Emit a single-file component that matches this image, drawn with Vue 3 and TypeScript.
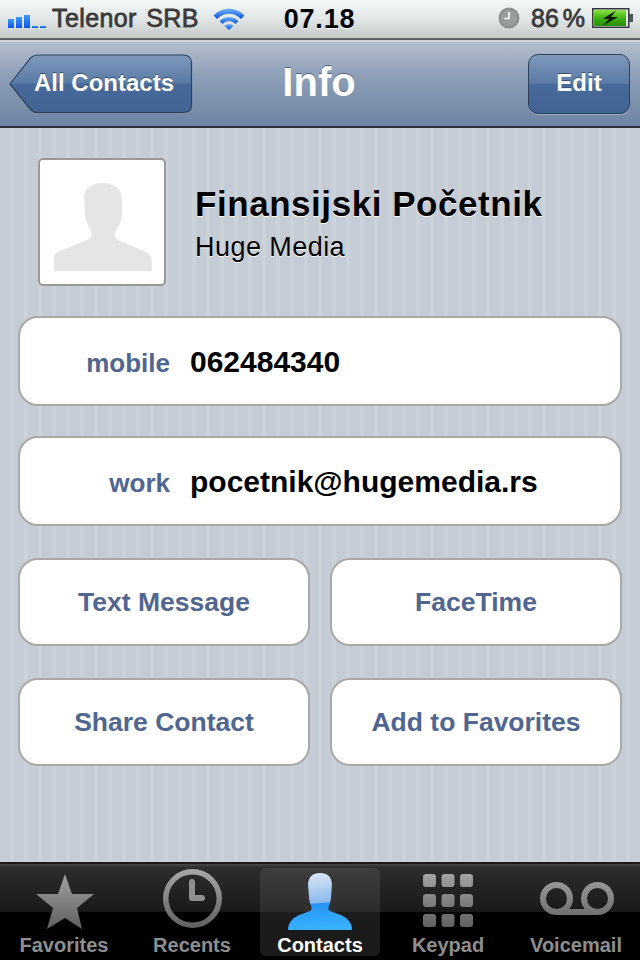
<script setup lang="ts">
interface Tab {
  label: string
  active?: boolean
}

const tabs: Tab[] = [
  { label: 'Favorites' },
  { label: 'Recents' },
  { label: 'Contacts', active: true },
  { label: 'Keypad' },
  { label: 'Voicemail' },
]

const signalBars = [9, 11, 13, 2, 2]
const keypadRows = [0, 1, 2]
const keypadCols = [0, 1, 2]
</script>

<template>
  <div class="phone">
    <header class="status">
      <div class="status-left">
        <span class="signal">
          <i v-for="(h, n) in signalBars" :key="n" :style="{ height: h + 'px' }" />
        </span>
        <span class="carrier">Telenor SRB</span>
        <svg class="wifi" width="32" height="24" viewBox="0 0 32 24">
          <defs>
            <linearGradient id="wifi-blue" x1="0" y1="0" x2="0" y2="1">
              <stop offset="0" stop-color="#6fb4f5" />
              <stop offset="1" stop-color="#0a50e0" />
            </linearGradient>
          </defs>
          <path d="M0.500 9.500 C9 0.500 23 0.500 31.500 9.500 L28 13 C21 6 11 6 4 13 Z" fill="url(#wifi-blue)" />
          <path d="M6.500 15 C12 9.500 20 9.500 25.500 15 L22.500 18 C18.500 14 13.500 14 9.500 18 Z" fill="url(#wifi-blue)" />
          <path d="M11.500 20 C14.500 17.300 17.500 17.300 20.500 20 L16 24 Z" fill="url(#wifi-blue)" />
        </svg>
      </div>
      <span class="clock">07.18</span>
      <div class="status-right">
        <svg class="alarm" width="22" height="22" viewBox="0 0 22 22">
          <circle cx="11" cy="11" r="10.500" fill="#8c9090" />
          <circle cx="11" cy="11" r="8" fill="#999d9d" />
          <path d="M11 5v6.500H6.500" fill="none" stroke="#fff" stroke-width="1.600" />
        </svg>
        <span class="percent">86 %</span>
        <svg class="battery" width="42" height="22" viewBox="0 0 42 22">
          <defs>
            <linearGradient id="batt-green" x1="0" y1="0" x2="0" y2="1">
              <stop offset="0" stop-color="#8fe04a" />
              <stop offset="0.500" stop-color="#3fb40e" />
              <stop offset="1" stop-color="#2a8a08" />
            </linearGradient>
          </defs>
          <rect x="0.750" y="1.750" width="36" height="18.500" fill="#e8ecec" stroke="#33383c" stroke-width="1.500" />
          <rect x="2" y="3" width="32" height="16" fill="url(#batt-green)" />
          <rect x="37" y="7" width="4" height="8" fill="#4a5660" />
          <path d="M24 3.500 L10.500 12 L17 12 L11 18.500 L26 10 L19 10 Z" fill="#0b1a05" />
        </svg>
      </div>
    </header>

    <nav class="navbar">
      <button class="bar-btn back">
        <svg class="back-shape" width="184" height="60" viewBox="0 0 184 60">
          <defs>
            <linearGradient id="btn-blue" x1="0" y1="0" x2="0" y2="1">
              <stop offset="0" stop-color="#7f98bb" />
              <stop offset="0.49" stop-color="#5a7ba6" />
              <stop offset="0.5" stop-color="#476a9b" />
              <stop offset="1" stop-color="#426493" />
            </linearGradient>
          </defs>
          <path d="M1 30 L22 3.500 Q24.500 1 29 1 H174 Q182.500 1 182.500 9 V51 Q182.500 58.500 174 58.500 H29 Q24.500 58.500 22 56 Z" fill="url(#btn-blue)" stroke="#2d4059" stroke-width="1.200" />
        </svg>
        <span>All Contacts</span>
      </button>
      <h1>Info</h1>
      <button class="bar-btn edit"><span>Edit</span></button>
    </nav>

    <main class="content">
      <section class="head">
        <div class="photo">
          <svg width="98" height="88" viewBox="0 0 98 88">
            <path fill="#e5e5e5" d="M0 88 L0 73 Q1 70 6 68 L32 57.500 Q37 55.500 38 52 L36 45 Q33 42 31 33 L30 13 Q31 7 34 5 Q40 0 48 0 Q57 0 63 5 Q68 9 68 17 L68 32 Q67 41 63 45 L60 52 Q61 55 65 57.500 L92 69 Q97 72 97.500 77 L98 88 Z" />
          </svg>
        </div>
        <div class="names">
          <div class="name">Finansijski Početnik</div>
          <div class="org">Huge Media</div>
        </div>
      </section>

      <div class="card row">
        <span class="key">mobile</span>
        <span class="val">062484340</span>
      </div>
      <div class="card row">
        <span class="key">work</span>
        <span class="val">pocetnik@hugemedia.rs</span>
      </div>

      <div class="actions">
        <div class="card action">Text Message</div>
        <div class="card action">FaceTime</div>
        <div class="card action">Share Contact</div>
        <div class="card action">Add to Favorites</div>
      </div>
    </main>

    <footer class="tabbar">
      <div v-for="t in tabs" :key="t.label" class="tab" :class="{ active: t.active }">
        <svg width="80" height="64" viewBox="0 0 80 64">
          <defs v-if="t.label === 'Favorites'">
            <linearGradient id="tab-grey" gradientUnits="userSpaceOnUse" x1="0" y1="0" x2="0" y2="62">
              <stop offset="0" stop-color="#a8a8a8" />
              <stop offset="1" stop-color="#5c5c5c" />
            </linearGradient>
            <linearGradient id="tab-blue" x1="0.3" y1="0" x2="0.38" y2="1">
              <stop offset="0" stop-color="#dce8f6" />
              <stop offset="0.53" stop-color="#8ab8ec" />
              <stop offset="0.55" stop-color="#2795f6" />
              <stop offset="1" stop-color="#38b2fd" />
            </linearGradient>
          </defs>
          <path v-if="t.label === 'Favorites'" fill="url(#tab-grey)" d="M41 5 L48 25 L70 25 L53 39 L58 60 L41 49 L23 60 L29 39 L12 25 L34 25 Z" />
          <g v-else-if="t.label === 'Recents'">
            <circle cx="40.500" cy="29.500" r="26.750" fill="none" stroke="url(#tab-grey)" stroke-width="5.500" />
            <path d="M40 13 V29 H50" fill="none" stroke="#8f8f8f" stroke-width="6" stroke-linejoin="round" stroke-linecap="round" />
          </g>
          <path v-else-if="t.label === 'Contacts'" fill="url(#tab-blue)" d="M8 61 Q8 55 12 51 Q14 48.500 18 46.500 L30 42 Q32 41 31.500 38 Q29.500 34 29 29 L28 15 Q29 4 40 4 Q51 4 52 15 L51 29 Q50.500 34 48.500 38 Q48 41 50 42 L62 46.500 Q66 48.500 68 51 Q72 55 72 61 Z" />
          <g v-else-if="t.label === 'Keypad'" fill="url(#tab-grey)">
            <template v-for="r in keypadRows" :key="r">
              <rect v-for="c in keypadCols" :key="c" :x="c * 18.500 + 15" :y="r * 20 + 5" width="13" height="13" rx="3" />
            </template>
          </g>
          <g v-else fill="none" stroke="url(#tab-grey)" stroke-width="6">
            <circle cx="20.500" cy="29.500" r="13.500" />
            <circle cx="61.500" cy="29.500" r="13.500" />
            <path d="M20.500 43 H61.500" />
          </g>
        </svg>
        <span>{{ t.label }}</span>
      </div>
    </footer>
  </div>
</template>

<style>
html, body {
  margin: 0;
  background: #000;
}
</style>

<style scoped>
.phone {
  width: 640px;
  height: 960px;
  display: flex;
  flex-direction: column;
  overflow: hidden;
  font-family: "Liberation Sans", Arial, sans-serif;
}

/* status bar */
.status {
  height: 40px;
  flex: none;
  display: grid;
  grid-template-columns: 1fr auto 1fr;
  align-items: center;
  padding: 0 6px 2px 8px;
  box-sizing: border-box;
  background: linear-gradient(#f2f7f8, #e2e6e7 50%, #c3c8c9);
  border-bottom: 2px solid #5c5f63;
  color: #3a3a3a;
}
.status-left,
.status-right {
  display: flex;
  align-items: center;
}
.status-right {
  justify-content: flex-end;
}
.signal {
  display: flex;
  align-items: flex-end;
  gap: 2px;
  height: 15px;
  margin-top: 4px;
}
.signal i {
  width: 6px;
  background: linear-gradient(#3f9af5, #0a55ec);
}
.carrier {
  margin-left: 6px;
  font-size: 25px;
  letter-spacing: 0.4px;
  word-spacing: 2px;
  -webkit-text-stroke: 0.8px #3a3a3a;
  text-shadow: 0 1px 0 #fff;
}
.wifi {
  margin-left: 14px;
}
.clock {
  margin: 2px 3px 0 0;
  font-size: 27px;
  font-weight: 700;
  letter-spacing: 0.8px;
  color: #000;
  text-shadow: 0 1px 0 #fff;
}
.alarm {
  margin-right: 11px;
}
.percent {
  font-size: 25px;
  word-spacing: -3px;
  -webkit-text-stroke: 0.8px #3a3a3a;
  text-shadow: 0 1px 0 #fff;
  margin-right: 7px;
}

/* nav bar */
.navbar {
  position: relative;
  height: 88px;
  flex: none;
  box-sizing: border-box;
  display: flex;
  align-items: center;
  justify-content: center;
  background: linear-gradient(#b4bfce, #8e9fb7 40%, #6d84a4);
  border-top: 2px solid #cdd5df;
  border-bottom: 2px solid #2d3034;
}
.navbar h1 {
  margin: -3px 0 0 -2px;
  font-size: 40px;
  font-weight: 700;
  color: #fff;
  text-shadow: 0 -1px 0 #52647e;
}
.bar-btn {
  position: absolute;
  top: 12px;
  height: 60px;
  padding: 0 0 3px;
  border: 0;
  background: none;
  font-family: inherit;
  font-size: 24px;
  font-weight: 700;
  color: #fff;
  text-shadow: 0 -1px 0 #3a4f6c;
}
.back {
  left: 9px;
  width: 184px;
}
.back-shape {
  position: absolute;
  left: 0;
  top: 0;
}
.back span {
  position: absolute;
  left: 25px;
  top: 15px;
  white-space: nowrap;
}
.edit {
  right: 10px;
  width: 102px;
  box-sizing: border-box;
  border: 1px solid #2d4059;
  border-radius: 10px;
  background: linear-gradient(#7f98bb, #5a7ba6 49%, #476a9b 50%, #426493);
  box-shadow: 0 1px 0 rgba(255, 255, 255, 0.3);
}

/* content */
.content {
  flex: 1;
  box-sizing: border-box;
  padding: 30px 18px 0;
  background: repeating-linear-gradient(90deg, #c5ccd5 0, #c5ccd5 10px, #cbd2da 10px, #cbd2da 14px);
}
.head {
  display: flex;
  align-items: center;
  padding-left: 20px;
  height: 128px;
}
.photo {
  width: 128px;
  height: 128px;
  flex: none;
  box-sizing: border-box;
  display: flex;
  justify-content: center;
  padding: 23px 0 0 2px;
  background: #fff;
  border: 2px solid #999;
  border-radius: 5px;
}
.names {
  margin: 2px 0 0 29px;
}
.name {
  font-size: 35px;
  font-weight: 700;
  color: #000;
  letter-spacing: 0.55px;
  text-shadow: 0 1px 0 #fff;
  line-height: 40px;
}
.org {
  font-size: 27px;
  color: #000;
  line-height: 32px;
  margin-top: 7px;
  letter-spacing: 0.45px;
  text-shadow: 0 1px 0 #fff;
}
.card {
  box-sizing: border-box;
  background: #fff;
  border: 2px solid #a8a8a8;
  border-radius: 20px;
}
.row {
  height: 90px;
  display: flex;
  align-items: center;
  margin-top: 30px;
}
.key {
  width: 150px;
  margin-top: 4px;
  text-align: right;
  font-size: 26px;
  font-weight: 700;
  color: #506690;
}
.val {
  margin: 2px 0 0 20px;
  font-size: 30px;
  font-weight: 700;
  color: #000;
}
.actions {
  display: grid;
  grid-template-columns: 292px 292px;
  column-gap: 20px;
  row-gap: 32px;
  margin-top: 32px;
}
.action {
  height: 88px;
  display: flex;
  align-items: center;
  justify-content: center;
  font-size: 26.500px;
  font-weight: 700;
  color: #506690;
}

/* tab bar */
.tabbar {
  height: 98px;
  flex: none;
  box-sizing: border-box;
  display: grid;
  grid-template-columns: repeat(5, 128px);
  padding: 4px 0;
  background: linear-gradient(#464646, #3a3a3a 2px, #2d2d2d 3px, #191919 48px, #000 48px);
  border-top: 2px solid #1a1a1a;
}
.tab {
  position: relative;
  display: flex;
  flex-direction: column;
  align-items: center;
  justify-content: flex-end;
  border-radius: 6px;
  color: #8e8e8e;
  font-size: 20px;
  font-weight: 700;
}
.tab span {
  margin-bottom: -1px;
  line-height: 24px;
}
.tab.active {
  margin: 0 4px;
  color: #fff;
  background: linear-gradient(#3e3e3e, #2c2c2c 50%, #1c1c1c 50%, #1a1a1a);
}
</style>
